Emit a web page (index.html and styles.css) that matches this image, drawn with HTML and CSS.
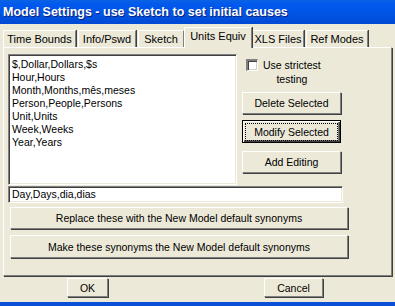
FILE: index.html
```html
<!DOCTYPE html>
<html lang="en">
  <head>
    <meta charset="UTF-8" />
    <title>Model Settings</title>
    <link rel="stylesheet" href="styles.css">
  </head>
  <body>
    <div class="window">
      <div class="titlebar">Model Settings - use Sketch to set initial causes</div>

      <div class="tabs">
        <div class="tab tab-time">Time Bounds</div>
        <div class="tab tab-info">Info/Pswd</div>
        <div class="tab tab-sketch">Sketch</div>
        <div class="tab tab-units active">Units Equiv</div>
        <div class="tab tab-xls">XLS Files</div>
        <div class="tab tab-ref">Ref Modes</div>
      </div>

      <div class="panel">
        <div class="top-row">
          <div class="listbox">
            <div>$,Dollar,Dollars,$s</div>
            <div>Hour,Hours</div>
            <div>Month,Months,mês,meses</div>
            <div>Person,People,Persons</div>
            <div>Unit,Units</div>
            <div>Week,Weeks</div>
            <div>Year,Years</div>
          </div>
          <div class="side">
            <label class="check">
              <span class="box"></span>
              <span class="check-text">Use strictest<br>testing</span>
            </label>
            <button class="btn side-btn">Delete Selected</button>
            <button class="btn side-btn default"><span class="focus">Modify Selected</span></button>
            <button class="btn side-btn">Add Editing</button>
          </div>
        </div>
        <div class="edit">Day,Days,dia,dias</div>
        <button class="btn wide">Replace these with the New Model default synonyms</button>
        <button class="btn wide wide-2">Make these synonyms the New Model default synonyms</button>
      </div>

      <div class="footer">
        <button class="btn ok">OK</button>
        <button class="btn cancel">Cancel</button>
      </div>
      <div class="bottom-line"></div>
    </div>
  </body>
</html>
```

FILE: styles.css
```css
body {
  margin: 0;
  background: #ece9d8;
  font-family: "Liberation Sans", Arial, sans-serif;
  font-size: 10.5px;
  color: #000;
}

.window {
  width: 395px;
  height: 306px;
  background: #ece9d8;
  display: flex;
  flex-direction: column;
  overflow: hidden;
}

.titlebar {
  height: 24px;
  line-height: 24px;
  padding-left: 3px;
  color: #fff;
  font-weight: bold;
  font-size: 12.5px;
  background: linear-gradient(#0a62e4 0%, #0058ee 20%, #0054e3 60%, #0049d4 100%);
  text-shadow: 1px 1px 0 #0a1e7a;
  white-space: nowrap;
}

.tabs {
  display: flex;
  align-items: flex-end;
  height: 23px;
  padding-left: 3px;
}

.tab {
  height: 17px;
  line-height: 17px;
  border-top: 1px solid #fff;
  border-left: 1px solid #fff;
  border-right: 1px solid #808080;
  box-shadow: 1px 0 0 #404040;
  margin-right: 2px;
  text-align: center;
  white-space: nowrap;
  box-sizing: border-box;
  font-size: 11px;
}

.tab-time { width: 73px; }
.tab-info { width: 58px; }
.tab-sketch { width: 46px; }
.tab-xls { width: 52px; }
.tab-ref { width: 62px; }

.tab.active {
  width: 68px;
  height: 21px;
  line-height: 17px;
  margin-left: -2px;
  margin-right: 0;
  margin-bottom: -1px;
  position: relative;
  z-index: 1;
  background: #ece9d8;
}

.panel {
  width: 387px;
  height: 227px;
  margin-left: 3px;
  border-top: 1px solid #fff;
  border-left: 1px solid #fff;
  border-right: 1px solid #808080;
  border-bottom: 1px solid #808080;
  box-shadow: 1px 1px 0 #404040;
  display: flex;
  flex-direction: column;
  align-items: flex-start;
}

.top-row {
  display: flex;
  margin-top: 6px;
  margin-left: 4px;
}

.listbox {
  width: 224px;
  height: 126px;
  background: #fff;
  border-top: 1px solid #808080;
  border-left: 1px solid #808080;
  border-right: 1px solid #fff;
  border-bottom: 1px solid #fff;
  box-shadow: inset 1px 1px 0 #404040, inset -1px -1px 0 #ece9d8;
  padding: 3px 0 0 3px;
  line-height: 13px;
}

.side {
  display: flex;
  flex-direction: column;
  margin-left: 5px;
}

.check {
  display: flex;
  align-items: flex-start;
  margin-left: 4px;
  margin-top: 4px;
  height: 34px;
}

.box {
  width: 9px;
  height: 9px;
  flex: none;
  background: #fff;
  border-top: 2px solid #808080;
  border-left: 2px solid #808080;
  border-right: 1px solid #fff;
  border-bottom: 1px solid #fff;
  box-shadow: inset 1px 1px 0 #404040, inset -1px -1px 0 #d4d0c8;
  margin-top: 1px;
}

.check-text {
  margin-left: 5px;
  text-align: center;
  line-height: 14px;
}

.btn {
  font-family: inherit;
  font-size: 10.5px;
  color: #000;
  background: #ece9d8;
  border-top: 1px solid #fff;
  border-left: 1px solid #fff;
  border-right: 1px solid #808080;
  border-bottom: 1px solid #808080;
  box-shadow: 1px 1px 0 #404040;
  padding: 0;
  margin: 0;
  box-sizing: border-box;
}

.side-btn {
  width: 99px;
  height: 22px;
  margin-bottom: 6px;
}

.side-btn.default {
  border: 1px solid #000;
  box-shadow: inset 1px 1px 0 #fff, inset -1px -1px 0 #404040, inset -2px -2px 0 #808080;
  height: 23px;
  margin-bottom: 8px;
}

.focus {
  display: inline-block;
  padding: 2px 3px;
  border: 1px dotted #000;
  width: 85px;
}

.edit {
  width: 330px;
  height: 15px;
  line-height: 14px;
  margin: 1px 0 0 4px;
  padding-left: 3px;
  background: #fff;
  border-top: 1px solid #808080;
  border-left: 1px solid #808080;
  border-right: 1px solid #fff;
  border-bottom: 1px solid #fff;
  box-shadow: inset 1px 1px 0 #404040, inset -1px -1px 0 #ece9d8;
}

.wide {
  width: 338px;
  height: 22px;
  margin: 4px 0 0 6px;
}

.wide-2 {
  height: 23px;
  margin-top: 6px;
}

.footer {
  display: flex;
  height: 26px;
  padding-top: 2px;
  box-sizing: border-box;
}

.ok {
  width: 41px;
  height: 19px;
  margin-left: 67px;
}

.cancel {
  width: 59px;
  height: 19px;
  margin-left: 156px;
}

.bottom-line {
  height: 4px;
  background: #0a4fd6;
}
```
